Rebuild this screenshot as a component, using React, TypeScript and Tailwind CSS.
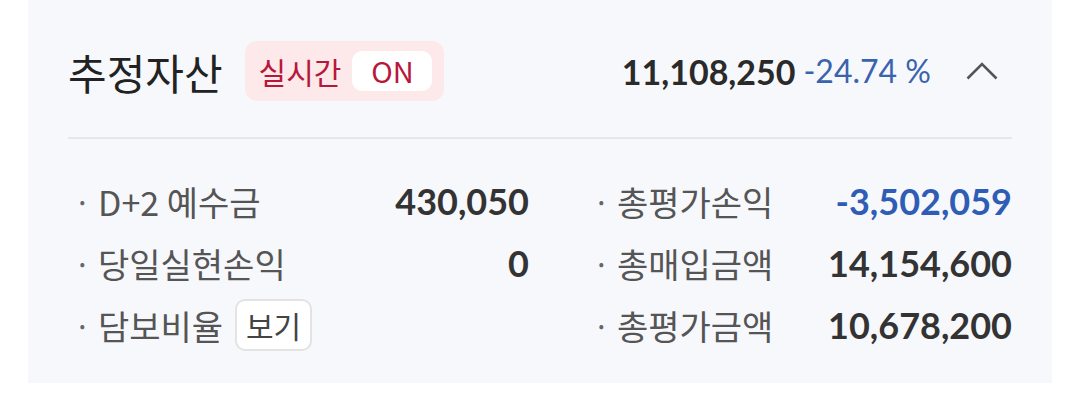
const KR = "font-['Noto_Sans_CJK_KR','Noto_Sans',sans-serif]";
const NUM = "font-['Lato','Noto_Sans_CJK_KR',sans-serif]";

type Row = { label: string; value: string; blue?: boolean; button?: boolean };

const left: Row[] = [
  { label: 'D+2 예수금', value: '430,050' },
  { label: '당일실현손익', value: '0' },
  { label: '담보비율', value: '', button: true },
];

const right: Row[] = [
  { label: '총평가손익', value: '-3,502,059', blue: true },
  { label: '총매입금액', value: '14,154,600' },
  { label: '총평가금액', value: '10,678,200' },
];

function InfoRow({ row }: { row: Row }) {
  return (
    <div className="h-[62px] flex items-center justify-between">
      <div className={`flex items-center text-[34px] text-[#555] ${KR}`}>
        <span className="w-[30px] pl-[6px] text-[30px] text-[#666]">·</span>
        <span>{row.label}</span>
        {row.button && (
          <span className="ml-[12px] h-[52px] w-[77px] flex items-center justify-center rounded-[10px] border-2 border-[#e3e3e3] bg-white text-[30px] text-[#444]">
            보기
          </span>
        )}
      </div>
      {row.value && (
        <span className={`${NUM} font-bold text-[36px] ${row.blue ? 'text-[#2f5db5]' : 'text-[#333]'}`}>
          {row.value}
        </span>
      )}
    </div>
  );
}

export default function App() {
  return (
    <div className="w-[1080px] h-[404px] bg-white">
      <div className="ml-[28px] w-[1024px] h-[383px] bg-[#f7f8fc] px-10">
        <div className="h-[137px] pt-[5px] flex items-center">
          <h1 className={`${KR} text-[42px] text-[#222] font-normal`}>추정자산</h1>
          <div className="ml-[22px] h-[60px] w-[199px] flex items-center rounded-[12px] bg-[#fde9ea] pl-[14px]">
            <span className={`${KR} text-[30px] text-[#b8173c]`}>실시간</span>
            <span className={`${KR} ml-[11px] h-[40px] w-[80px] flex items-center justify-center rounded-[10px] bg-white text-[29px] text-[#b8173c]`}>
              ON
            </span>
          </div>
          <div className="flex-1" />
          <span className={`${NUM} font-bold text-[34px] text-[#2a2a2a]`}>11,108,250</span>
          <span className={`${NUM} ml-[8px] text-[32px] text-[#3a63ad]`}>-24.74 %</span>
          <svg className="ml-[35px] mr-[14px]" width="32" height="18" viewBox="0 0 32 18" fill="none">
            <polyline points="1.5,16.5 16,2 30.5,16.5" stroke="#555" strokeWidth="2.6" />
          </svg>
        </div>
        <div className="h-[2px] bg-[#e6e7eb]" />
        <div className="pt-[31px] flex">
          <div className="w-[461px]">
            {left.map((r) => (
              <InfoRow key={r.label} row={r} />
            ))}
          </div>
          <div className="ml-[58px] flex-1">
            {right.map((r) => (
              <InfoRow key={r.label} row={r} />
            ))}
          </div>
        </div>
      </div>
    </div>
  );
}
